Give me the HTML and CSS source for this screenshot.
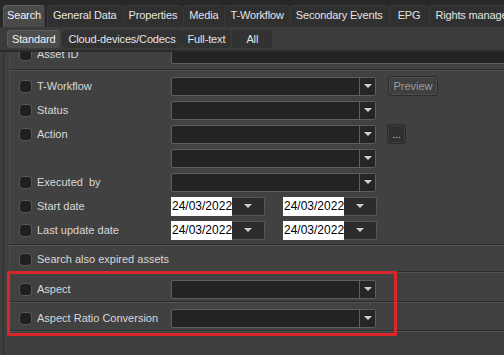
FILE: index.html
```html
<!DOCTYPE html>
<html>
<head>
<meta charset="utf-8">
<link rel="stylesheet" href="styles.css">
</head>
<body>
<div class="app">
  <div class="tabs-main">
    <div class="tab sel">Search</div>
    <div class="tab">General Data</div>
    <div class="tab">Properties</div>
    <div class="tab">Media</div>
    <div class="tab">T-Workflow</div>
    <div class="tab">Secondary Events</div>
    <div class="tab short">EPG</div>
    <div class="tab">Rights management</div>
  </div>
  <div class="tabs-sub">
    <div class="stab sel">Standard</div>
    <div class="stab">Cloud-devices/Codecs</div>
    <div class="stab">Full-text</div>
    <div class="stab wide">All</div>
  </div>
  <div class="panel">
    <div class="scroll">
      <div class="group g1">
        <div class="row">
          <span class="cb"></span><span class="label">Asset ID</span>
          <span class="field long"></span>
        </div>
      </div>
      <div class="group g2">
        <div class="row">
          <span class="cb"></span><span class="label">T-Workflow</span>
          <span class="combo"><span class="btn"><i class="tri"></i></span></span>
          <span class="pbtn">Preview</span>
        </div>
        <div class="row">
          <span class="cb"></span><span class="label">Status</span>
          <span class="combo"><span class="btn"><i class="tri"></i></span></span>
        </div>
        <div class="row">
          <span class="cb"></span><span class="label">Action</span>
          <span class="combo"><span class="btn"><i class="tri"></i></span></span>
          <span class="dbtn">...</span>
        </div>
        <div class="row">
          <span class="cbspace"></span><span class="label"></span>
          <span class="combo"><span class="btn"><i class="tri"></i></span></span>
        </div>
        <div class="row">
          <span class="cb"></span><span class="label">Executed&nbsp; by</span>
          <span class="combo"><span class="btn"><i class="tri"></i></span></span>
        </div>
        <div class="row">
          <span class="cb"></span><span class="label">Start date</span>
          <span class="date"><span class="val">24/03/2022</span><span class="dbt"><i class="tri"></i></span></span>
          <span class="date second"><span class="val">24/03/2022</span><span class="dbt"><i class="tri"></i></span></span>
        </div>
        <div class="row">
          <span class="cb"></span><span class="label">Last update date</span>
          <span class="date"><span class="val">24/03/2022</span><span class="dbt"><i class="tri"></i></span></span>
          <span class="date second"><span class="val">24/03/2022</span><span class="dbt"><i class="tri"></i></span></span>
        </div>
      </div>
      <div class="group g3">
        <div class="row">
          <span class="cb"></span><span class="label wide-label">Search also expired assets</span>
        </div>
      </div>
      <div class="group g4">
        <div class="row">
          <span class="cb"></span><span class="label">Aspect</span>
          <span class="combo"><span class="btn"><i class="tri"></i></span></span>
        </div>
      </div>
      <div class="group g5">
        <div class="row">
          <span class="cb"></span><span class="label">Aspect Ratio Conversion</span>
          <span class="combo"><span class="btn"><i class="tri"></i></span></span>
        </div>
      </div>
    </div>
  </div>
  <div class="highlight"></div>
</div>
</body>
</html>
```
FILE: styles.css
```css
html, body {
  margin: 0;
  padding: 0;
  background: #3f3f3f;
}
body {
  font-family: "Liberation Sans", Arial, sans-serif;
  font-size: 11px;
  color: #d6d6d6;
}
.app {
  position: relative;
  width: 504px;
  height: 355px;
  overflow: hidden;
  background: #3d3d3d;
}

/* main tab row */
.tabs-main {
  display: flex;
  align-items: flex-end;
  height: 27px;
  box-sizing: border-box;
  padding-left: 1px;
  background: #282828;
  overflow: hidden;
  white-space: nowrap;
}
.tab {
  height: 22px;
  line-height: 21px;
  padding: 0 6px;
  color: #e4e4e4;
  background: #303030;
  border-radius: 4px 4px 0 0;
  box-shadow: inset 1px 1px 0 #393939;
  letter-spacing: -0.15px;
  flex: none;
}
.tab.short {
  padding: 0 9px;
}
.tab.sel {
  padding: 0 4px;
  margin: 0 2px;
  background: #4a4a4a;
  box-shadow: inset 1px 1px 0 #5c5c5c, inset -1px 0 0 #3a3a3a;
  color: #f0f0f0;
}

/* sub tab row */
.tabs-sub {
  display: flex;
  align-items: flex-end;
  height: 25px;
  box-sizing: border-box;
  padding-left: 7px;
  padding-bottom: 2px;
  background: #3b3b3b;
  border-bottom: 2px solid #2a2a2a;
  white-space: nowrap;
}
.stab {
  height: 18px;
  line-height: 18px;
  padding: 0 6px;
  color: #e4e4e4;
  background: #323232;
  border-radius: 4px;
  text-align: center;
  letter-spacing: -0.15px;
  flex: none;
}
.stab.sel {
  padding: 0 5px;
  margin-right: 2px;
  background: #4c4c4c;
  box-shadow: inset 1px 1px 0 #5e5e5e;
  color: #f2f2f2;
}
.stab.wide {
  min-width: 28px;
  margin-left: 1px;
}

/* content panel */
.panel {
  height: 303px;
  overflow: hidden;
  margin-left: 3px;
  border-left: 1px solid #2e2e2e;
  background: #3e3e3e;
}
.scroll {
  margin-top: -10px;
}
.group {
  margin-left: 5px;
  padding-left: 9px;
  background: #414141;
  border-left: 1px solid #4b4b4b;
  border-bottom: 1px solid #2c2c2c;
  box-shadow: 0 1px 0 #535353;
  margin-bottom: 1px;
}
.g1 { padding-bottom: 3px; }
.g2 { padding-top: 3px; padding-bottom: 2px; }
.g3 { padding-top: 1px; }
.g4 { padding-top: 4px; }
.g5 { padding-top: 3px; }

.row {
  display: flex;
  align-items: center;
  height: 24px;
  white-space: nowrap;
}
.cb, .cbspace {
  flex: none;
  width: 13px;
  height: 13px;
  box-sizing: border-box;
}
.cb {
  border: 1px solid #585858;
  background: #1f1f1f;
  border-radius: 4px;
}
.label {
  flex: none;
  width: 134px;
  margin-left: 5px;
  color: #d8d8d8;
}
.wide-label {
  width: auto;
}

.field, .combo {
  flex: none;
  height: 19px;
  box-sizing: border-box;
  border: 1px solid #5e5e5e;
  background: #232323;
  border-radius: 2px;
}
.field.long {
  width: 360px;
}
.combo {
  width: 205px;
  display: flex;
  justify-content: flex-end;
}
.combo .btn {
  width: 15px;
  border-left: 1px solid #5e5e5e;
  display: flex;
  align-items: center;
  justify-content: center;
  background: #262626;
}
.tri {
  display: block;
  width: 0;
  height: 0;
  border-left: 4px solid transparent;
  border-right: 4px solid transparent;
  border-top: 4px solid #cfcfcf;
}

.pbtn {
  flex: none;
  margin-left: 12px;
  width: 50px;
  height: 20px;
  box-sizing: border-box;
  border: 1px solid #2c2c2c;
  border-radius: 3px;
  background: #3f3f3f;
  box-shadow: inset 0 0 0 1px #4e4e4e;
  color: #9c9c9c;
  text-align: center;
  line-height: 18px;
}
.dbtn {
  flex: none;
  margin-left: 11px;
  width: 19px;
  height: 20px;
  box-sizing: border-box;
  border: 1px solid #2a2a2a;
  border-radius: 3px;
  background: #2f2f2f;
  box-shadow: inset 0 0 0 1px #3d3d3d;
  color: #cfcfcf;
  text-align: center;
  line-height: 20px;
  font-size: 10px;
}

.date {
  flex: none;
  display: flex;
  width: 94px;
  height: 19px;
}
.date.second {
  margin-left: 18px;
}
.date .val {
  width: 61px;
  background: #ffffff;
  color: #000000;
  font-size: 12px;
  line-height: 19px;
  padding-left: 1px;
  box-sizing: border-box;
}
.date .dbt {
  flex: 1;
  box-sizing: border-box;
  border: 1px solid #575757;
  border-left: none;
  border-radius: 0 2px 2px 0;
  background: #2b2b2b;
  display: flex;
  align-items: center;
  justify-content: center;
}

.highlight {
  position: absolute;
  left: 7px;
  top: 271px;
  width: 390px;
  height: 65px;
  box-sizing: border-box;
  border: 3px solid #d7262c;
  border-radius: 1px;
}
```
